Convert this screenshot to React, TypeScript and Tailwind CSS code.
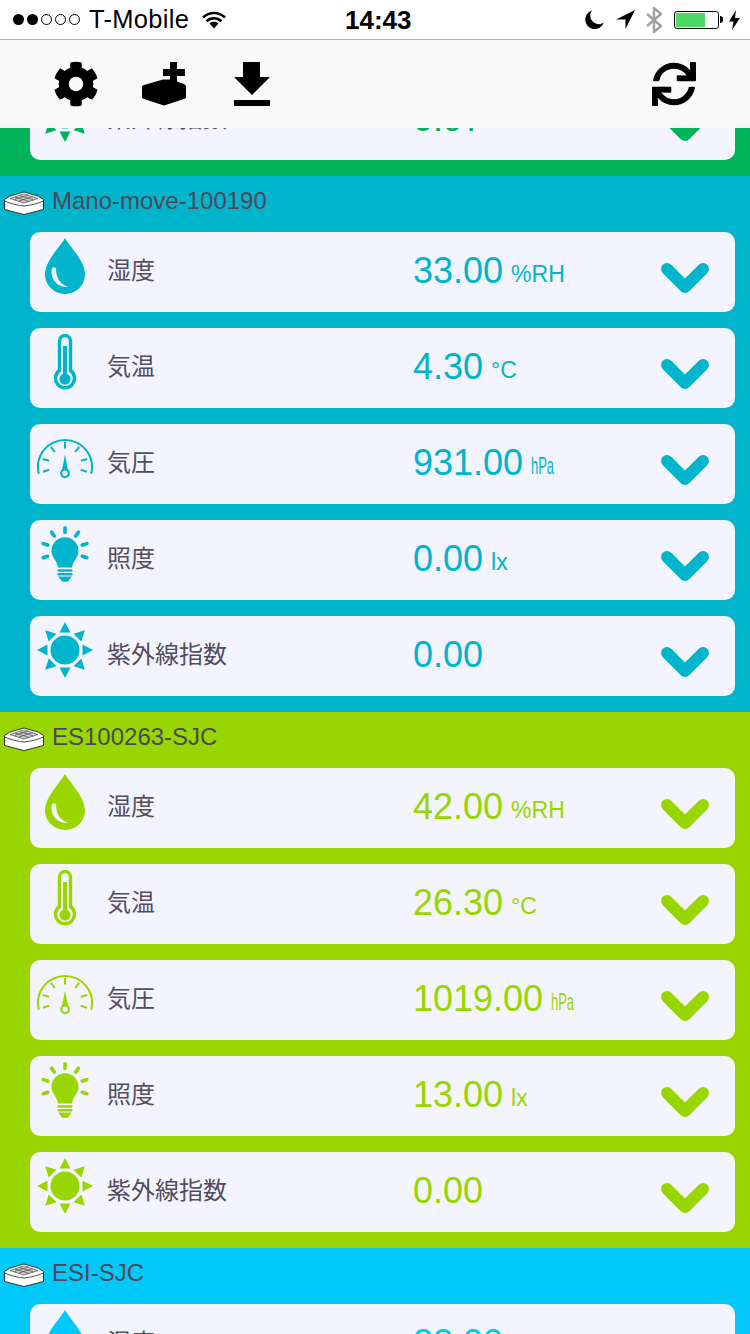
import React from "react";
import { FaCog, FaSync } from "react-icons/fa";

const Drop = () => (
  <svg viewBox="0 0 56 56" className="w-14 h-14">
    <path fill="currentColor" d="M28 0C23 9 8 23 8 36.5a20 19.5 0 0 0 40 0C48 23 33 9 28 0Z" />
    <path fill="#f3f4fd" d="M15 30C12.500 40.500 20 49.500 31 49 23.500 46 19 41 19 30.300 18 28.800 15.800 28.800 15 30Z" />
  </svg>
);

const Thermo = () => (
  <svg viewBox="0 0 56 56" className="w-14 h-14">
    <path fill="none" stroke="currentColor" strokeWidth="3.400" d="M22.500 36.500V7a5.500 5.500 0 0 1 11 0V36.500a9.500 9.500 0 1 1-11 0Z" />
    <rect x="26" y="12" width="4" height="28" fill="currentColor" />
    <circle cx="28" cy="45" r="5.600" fill="currentColor" />
  </svg>
);

const Gauge = () => (
  <svg viewBox="0 0 56 56" className="w-14 h-14">
    <path fill="none" stroke="currentColor" strokeWidth="2" strokeLinecap="round" d="M1.700 43A27 27 0 1 1 54.300 43" />
    {[0, 38, -38, 75, -75, 107, -107].map((a) => (
      <line key={a} x1="28" y1="12" x2="28" y2="18.500" stroke="currentColor" strokeWidth="2" transform={`rotate(${a} 28 35)`} />
    ))}
    <path fill="currentColor" d="M28 24.500 31 40H25Z" />
    <circle cx="28" cy="43.300" r="3.800" fill="#f3f4fd" stroke="currentColor" strokeWidth="2.200" />
  </svg>
);

const Bulb = () => (
  <svg viewBox="0 0 56 56" className="w-14 h-14">
    {[0, 36, -36, 72, -72, 108, -108].map((a) => (
      <line key={a} x1="28" y1="1.800" x2="28" y2="6.500" stroke="currentColor" strokeWidth="3.600" strokeLinecap="round" transform={`rotate(${a} 28 24.700)`} />
    ))}
    <path fill="currentColor" d="M21 41.500C20 34 14.500 32 14.500 24.700a13.500 13.500 0 0 1 27 0C41.500 32 36 34 35 41.500Z" />
    <rect x="20.500" y="43.300" width="15" height="2.400" rx="1.200" fill="currentColor" />
    <rect x="20.500" y="47" width="15" height="2.400" rx="1.200" fill="currentColor" />
    <path fill="currentColor" d="M21 50.500H35L30.500 55.800H25.500Z" />
  </svg>
);

const Sun = () => (
  <svg viewBox="0 0 56 56" className="w-14 h-14">
    <circle cx="28" cy="28" r="14.500" fill="currentColor" />
    {[0, 45, 90, 135, 180, 225, 270, 315].map((a) => (
      <path key={a} fill="currentColor" d="M28 0 33.500 10.500H22.500Z" transform={`rotate(${a} 28 28)`} />
    ))}
  </svg>
);

const Chevron = () => (
  <svg viewBox="0 0 48 30" className="w-12 h-[30px] mt-[12px] mr-[26px] shrink-0">
    <path fill="none" stroke="currentColor" strokeWidth="12" strokeLinecap="round" strokeLinejoin="round" d="M6 6 24 24 42 6" />
  </svg>
);

const Device = () => (
  <svg viewBox="0 0 40 24" className="w-10 h-6 shrink-0 mt-[3px]">
    <path fill="#fff" stroke="#222" strokeWidth="0.900" strokeLinejoin="round" d="M0.500 8.500 6 5 20 1 34 5 39.500 8.500V18.500L20 23.500 0.500 18.500Z" />
    <path fill="none" stroke="#222" strokeWidth="0.800" d="M0.500 10C8 13 14 14.500 20 15 26 14.500 32 13 39.500 10" />
    <path fill="#d5d5d5" stroke="#444" strokeWidth="0.700" d="M6 7.500 20 3 34 7.500 20 12Z" />
    <path fill="none" stroke="#444" strokeWidth="0.700" d="M11 6 25 10.500M15.500 4.500 29.500 9M15 10 29 5.500M10.500 8.500 24.500 4" />
  </svg>
);

const BoxPlus = () => (
  <svg viewBox="0 0 44 44" className="w-11 h-11">
    <path fill="#000" d="M28 0H35V7H43V14H35V19.500L42 22Q44 23 44 25V35Q44 36.500 42 37L22 43.500 2 37Q0 36.500 0 35V25Q0 23.500 2 23L21 17.500H28V14H21V7H28Z" />
  </svg>
);

const Download = () => (
  <svg viewBox="0 0 36 44" className="w-9 h-11">
    <path fill="#000" d="M9 0H26V15H36L18 33 0 15H9ZM0 38H36V44H0Z" />
  </svg>
);

const Wifi = () => (
  <svg viewBox="0 0 24 18" className="w-6 h-[18px] ml-[13px]">
    <path fill="none" stroke="#000" strokeWidth="2.600" d="M1 6.500C7.500 0.500 16.500 0.500 23 6.500M4.500 10.300C9 6.300 15 6.300 19.500 10.300" />
    <path fill="#000" d="M7.500 12.500C10 10.300 14 10.300 16.500 12.500L12 17.500Z" />
  </svg>
);

const Cols = [
  { label: "湿度", Icon: Drop },
  { label: "気温", Icon: Thermo },
  { label: "気圧", Icon: Gauge },
  { label: "照度", Icon: Bulb },
  { label: "紫外線指数", Icon: Sun },
];

function Unit({ u }: { u: string }) {
  if (u === "hPa")
    return <span className="inline-block text-[24px] ml-2 scale-x-[0.54] origin-left align-[1px]">hPa</span>;
  if (!u) return null;
  return <span className="text-[23px] ml-2 align-[1px]">{u}</span>;
}

function Row({ label, Icon, value, unit }: { label: string; Icon: React.ComponentType; value: string; unit: string }) {
  return (
    <div className="flex h-20 items-center rounded-[10px] bg-[#f3f4fd]">
      <div className="self-start mt-1.5 ml-[7px] w-14 h-14 shrink-0">
        <Icon />
      </div>
      <div className="ml-[15px] w-[305px] shrink-0 -mt-0.5 -translate-x-px text-[24px] text-[#524d60] leading-none">{label}</div>
      <div className="flex-1 -mt-0.5 whitespace-nowrap leading-none">
        <span className="text-[36px]">{value}</span>
        <Unit u={unit} />
      </div>
      <Chevron />
    </div>
  );
}

function Section({ name, cls, values }: { name: string; cls: string; values: string[] }) {
  const units = ["%RH", "°C", "hPa", "lx", ""];
  return (
    <section className={cls}>
      <div className="flex h-14 items-center pl-1 pb-[6px]">
        <Device />
        <span className="ml-2 text-[24px] text-[#4d4859] leading-none">{name}</span>
      </div>
      <div className="flex flex-col gap-4 pl-[30px] pr-[15px] pb-4">
        {Cols.map((c, i) => (
          <Row key={c.label} label={c.label} Icon={c.Icon} value={values[i]} unit={units[i]} />
        ))}
      </div>
    </section>
  );
}

export default function App() {
  return (
    <div className="flex h-[1334px] w-[750px] flex-col overflow-hidden bg-white font-['Liberation_Sans','Noto_Sans_CJK_JP',sans-serif]">
      <header className="flex h-10 shrink-0 items-center border-b border-[#b2b2b2] bg-white pl-[13px] text-black">
        <div className="flex w-[332px] shrink-0 items-center">
          <div className="flex gap-[3px]">
            <i className="h-[11px] w-[11px] rounded-full bg-black" />
            <i className="h-[11px] w-[11px] rounded-full bg-black" />
            <i className="h-[11px] w-[11px] rounded-full border border-black" />
            <i className="h-[11px] w-[11px] rounded-full border border-black" />
            <i className="h-[11px] w-[11px] rounded-full border border-black" />
          </div>
          <span className="ml-[9px] text-[25.500px] leading-none tracking-[0.3px]">T-Mobile</span>
          <Wifi />
        </div>
        <span className="text-[26px] font-bold leading-none">14:43</span>
        <div className="ml-auto flex items-center pr-[10px]">
          <svg viewBox="0 0 19 19" className="h-[19px] w-[19px]">
            <path fill="#000" d="M7 0.500A9.500 9.500 0 1 0 18.800 12.500 8.500 8.500 0 0 1 7 0.500Z" />
          </svg>
          <svg viewBox="0 0 19 19" className="ml-3 h-[19px] w-[19px]">
            <path fill="#000" d="M19 0 0 9.500H9.500V19Z" />
          </svg>
          <svg viewBox="0 0 16 26" className="ml-[11px] h-[26px] w-4">
            <path fill="none" stroke="#a0a0a0" strokeWidth="2.400" d="M1 7 15 19 8 25V1L15 7 1 19" />
          </svg>
          <div className="ml-3 flex h-[18px] w-[45px] items-center rounded-[3px] border border-black p-[1px]">
            <div className="h-full w-[29px] bg-[#4cd964]" />
          </div>
          <div className="ml-px h-[7px] w-[3px] rounded-r-sm bg-black" />
          <svg viewBox="0 0 11 20" className="ml-1.5 h-5 w-[11px]">
            <path fill="#000" d="M7 0 0 11.500H4.500L3 20 11 8H6Z" />
          </svg>
        </div>
      </header>
      <nav className="z-10 flex h-[88px] shrink-0 items-center bg-[#f9f9f9] pl-[53px] pr-[54px] text-black">
        <FaCog className="h-[46px] w-[46px]" />
        <div className="ml-[43px]"><BoxPlus /></div>
        <div className="ml-12"><Download /></div>
        <FaSync className="ml-auto h-11 w-11" />
      </nav>
      <main className="flex-1 overflow-hidden">
        <div className="-mt-12 bg-[#00b25a] pb-4 pl-[30px] pr-[15px] text-[#00b25a]">
          <Row label="紫外線指数" Icon={Sun} value="0.97" unit="" />
        </div>
        <Section name="Mano-move-100190" cls="bg-[#00b4cc] text-[#00b4cc]" values={["33.00", "4.30", "931.00", "0.00", "0.00"]} />
        <Section name="ES100263-SJC" cls="bg-[#99d600] text-[#99d600]" values={["42.00", "26.30", "1019.00", "13.00", "0.00"]} />
        <Section name="ESI-SJC" cls="bg-[#00c8f8] text-[#00c8f8]" values={["22.00", "22.00", "1000.00", "0.00", "0.00"]} />
      </main>
    </div>
  );
}
